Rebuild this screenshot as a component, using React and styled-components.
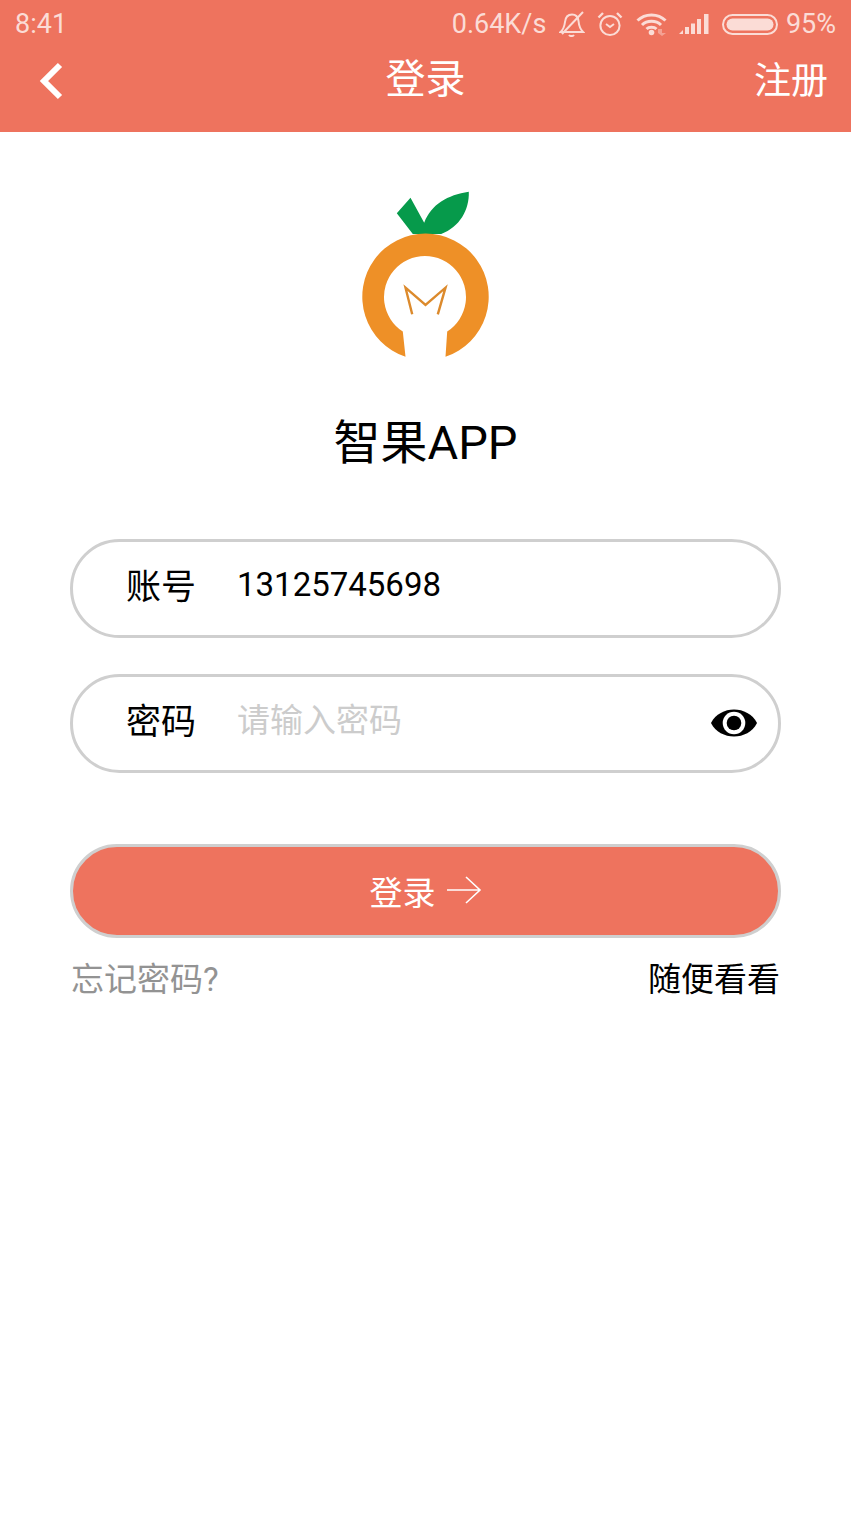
import styled, { createGlobalStyle } from "styled-components";

const CJK = `"Noto Sans CJK SC", "Noto Sans", sans-serif`;
const LATIN = `Roboto, "Noto Sans CJK SC", sans-serif`;

const GlobalStyle = createGlobalStyle`
  html, body {
    margin: 0;
    padding: 0;
    background: #fff;
  }
`;

const App = () => {
  return (
    <Screen>
      <GlobalStyle />
      <Header>
        <StatusBar>
          <StatusText>8:41</StatusText>
          <StatusRight>
            <StatusText>0.64K/s</StatusText>
            <BellIcon />
            <AlarmIcon />
            <WifiIcon />
            <SignalIcon />
            <BatteryIcon />
            <BatteryPercent>95%</BatteryPercent>
          </StatusRight>
        </StatusBar>
        <NavBar>
          <BackIcon />
          <NavTitle>登录</NavTitle>
          <NavAction>注册</NavAction>
        </NavBar>
      </Header>

      <LogoWrap>
        <Logo />
      </LogoWrap>
      <AppName>智果APP</AppName>

      <Form>
        <Field>
          <FieldLabel>账号</FieldLabel>
          <FieldValue>13125745698</FieldValue>
        </Field>
        <Field>
          <FieldLabel>密码</FieldLabel>
          <Placeholder>请输入密码</Placeholder>
          <EyeIcon />
        </Field>
        <LoginButton>
          登录
          <ArrowIcon />
        </LoginButton>
        <LinkRow>
          <Link $muted>忘记密码?</Link>
          <Link>随便看看</Link>
        </LinkRow>
      </Form>
    </Screen>
  );
};

// Icons
const BackIcon = () => (
  <BackSvg width="26" height="38" viewBox="0 0 26 38">
    <path d="M21 3 L5 19 L21 35" fill="none" stroke="#fff" strokeWidth="6" />
  </BackSvg>
);

const BellIcon = () => (
  <svg width="26" height="26" viewBox="0 0 26 26" fill="none" stroke="#fbdcd6" strokeWidth="2">
    <path d="M1.5 21 C5 18 5.5 15 6 11 C6.5 6 9.5 3.5 13 3.5 C16.5 3.5 19 6 19.5 10 C20 15 21 18 24 21 Z" />
    <path d="M24 1 L3 23" />
    <path d="M10 24 C11 25.4 14 25.4 15 24" />
  </svg>
);

const AlarmIcon = () => (
  <svg width="26" height="26" viewBox="0 0 26 26" fill="none" stroke="#fbdcd6" strokeWidth="2">
    <circle cx="13" cy="14.5" r="9.6" />
    <path d="M1.5 6.5 L6 2 M20 2 L24.5 6.5" strokeWidth="2.4" />
    <path d="M9 13 L13 16 L17 13" />
  </svg>
);

const WifiIcon = () => (
  <svg width="31" height="24" viewBox="0 0 31 24" fill="none" stroke="#fbdcd6" strokeWidth="3">
    <path d="M1.5 8.5 C9 1 22 1 29.5 8.5" />
    <path d="M6 13 C11 8 20 8 25 13" />
    <path d="M10.5 17 C13 14.5 18 14.5 20.5 17" />
    <circle cx="15.5" cy="20.5" r="2.8" fill="#fbdcd6" stroke="none" />
    <path d="M22 17 L26 17 L26 21 L30 21 L26 24 L22 21 Z" fill="#fbdcd6" stroke="none" opacity="0.45" />
  </svg>
);

const SignalIcon = () => (
  <svg width="30" height="20" viewBox="0 0 30 20" fill="#fbdcd6">
    <path d="M0 20 L4 16 L4 20 Z" />
    <rect x="6" y="13" width="4" height="7" />
    <rect x="12" y="9.5" width="4" height="10.5" />
    <rect x="18" y="5" width="4" height="15" />
    <rect x="25" y="0" width="4.5" height="20" />
  </svg>
);

const BatteryIcon = () => (
  <svg width="56" height="21" viewBox="0 0 56 21">
    <rect x="1" y="1" width="54" height="19" rx="9.5" fill="none" stroke="#fbdcd6" strokeWidth="2" />
    <rect x="4.5" y="4.5" width="47" height="12" rx="6" fill="#fbdcd6" />
  </svg>
);

const Logo = () => (
  <svg width="170" height="190" viewBox="1.5 0 170 190">
    <path
      d="M57.3 33.3 L71 17.7 L84.7 42.7 C92 24 108 15 129.3 11.7 C130 30 120 47 101.7 54 L73.3 54 Z"
      fill="#069a4b"
    />
    <path
      d="M66 176.7 A63.2 63.2 0 1 1 106 176.7 L107.7 151.5 A41 41 0 1 0 63.3 151.5 Z"
      fill="#ee9027"
    />
    <path
      d="M72.7 134.3 L66 107.7 L86 125 L106 107.7 L98.3 134.3"
      fill="none"
      stroke="#dc8a2c"
      strokeWidth="2.4"
    />
  </svg>
);

const EyeIcon = () => (
  <EyeSvg width="46" height="30" viewBox="0 0 46 30">
    <path d="M0 15 C9 -3 37 -3 46 15 C37 33 9 33 0 15 Z" fill="#000" />
    <circle cx="23" cy="15" r="11.3" fill="#fff" />
    <circle cx="23" cy="15" r="7.3" fill="#000" />
  </EyeSvg>
);

const ArrowIcon = () => (
  <ArrowSvg width="36" height="28" viewBox="0 0 36 28" fill="none" stroke="#fff" strokeWidth="1.6">
    <path d="M1 14 L34 14 M20 1 L34 14 L20 27" />
  </ArrowSvg>
);

// Styles
const Screen = styled.div`
  width: 851px;
  min-height: 1513px;
  background: #fff;
  font-family: ${CJK};
`;

const Header = styled.header`
  height: 132px;
  background: #ee735e;
`;

const StatusBar = styled.div`
  height: 48px;
  padding: 0 15px;
  display: flex;
  align-items: center;
  justify-content: space-between;
`;

const StatusRight = styled.div`
  display: flex;
  align-items: center;
  gap: 12.5px;
`;

const StatusText = styled.span`
  font-family: ${LATIN};
  font-size: 27px;
  line-height: 48px;
  color: #fbdcd6;
`;

const BatteryPercent = styled(StatusText)`
  margin-left: -4.5px;
`;

const NavBar = styled.div`
  height: 84px;
  padding: 0 23px 19px 39px;
  box-sizing: border-box;
  display: flex;
  align-items: center;
  justify-content: space-between;
  position: relative;
  color: #fff;
`;

const BackSvg = styled.svg`
  display: block;
`;

const NavTitle = styled.div`
  position: absolute;
  left: 0;
  right: 0;
  top: -3px;
  text-align: center;
  font-size: 40px;
  line-height: 62px;
`;

const NavAction = styled.div`
  font-size: 37px;
  line-height: 62px;
  align-self: flex-start;
  margin-top: -1px;
`;

const LogoWrap = styled.div`
  display: flex;
  justify-content: center;
  padding-top: 48px;

  svg {
    display: block;
  }
`;

const AppName = styled.h1`
  margin: 40px 0 0;
  text-align: center;
  font-family: ${LATIN};
  font-size: 47px;
  font-weight: 400;
  line-height: 66px;
  color: #000;
`;

const Form = styled.div`
  margin: 63px 70px 0;
  display: flex;
  flex-direction: column;
`;

const Field = styled.div`
  height: 99px;
  box-sizing: border-box;
  border: 3px solid #cfcfcf;
  border-radius: 50px;
  margin-bottom: 36px;
  padding: 0 21px 0 53px;
  display: flex;
  align-items: center;
`;

const FieldLabel = styled.span`
  width: 111px;
  flex-shrink: 0;
  font-size: 35px;
  line-height: 50px;
  color: #000;
  margin-top: -10px;
`;

const FieldValue = styled.span`
  font-family: ${LATIN};
  font-size: 33px;
  line-height: 50px;
  color: #000;
  margin-top: -7px;
`;

const Placeholder = styled.span`
  font-size: 33px;
  line-height: 50px;
  color: #cccccc;
  margin-top: -12px;
`;

const EyeSvg = styled.svg`
  display: block;
  margin-left: auto;
  margin-top: -2px;
`;

const LoginButton = styled.button`
  height: 94px;
  margin-top: 35px;
  box-sizing: border-box;
  border: 3px solid #cfcfcf;
  border-radius: 47px;
  background: #ee735e;
  color: #fff;
  font-family: ${CJK};
  font-size: 33px;
  display: flex;
  align-items: center;
  justify-content: center;
  gap: 10px;
  padding: 0;
`;

const ArrowSvg = styled.svg`
  display: block;
  margin-top: -2px;
`;

const LinkRow = styled.div`
  margin-top: 17px;
  padding: 0 1px;
  display: flex;
  justify-content: space-between;
`;

const Link = styled.span`
  font-family: ${LATIN};
  font-size: 33px;
  line-height: 50px;
  color: ${(props) => (props.$muted ? "#939393" : "#000")};
`;

export default App;
